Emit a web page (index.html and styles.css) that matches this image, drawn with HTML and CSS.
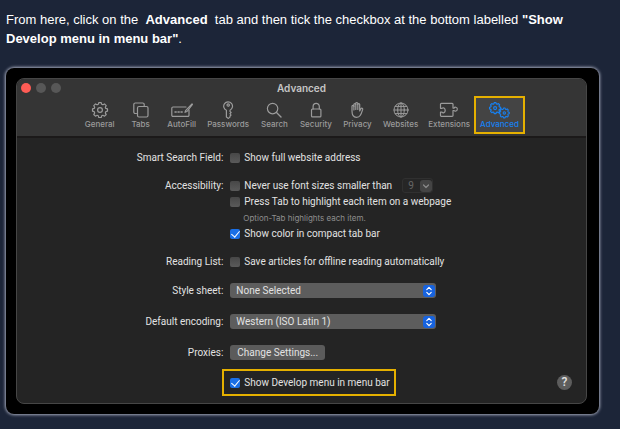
FILE: index.html
```html
<!DOCTYPE html>
<html lang="en">
<head>
<meta charset="utf-8">
<meta name="viewport" content="width=device-width, initial-scale=1">
<title>Enable the Develop menu</title>
<link rel="stylesheet" href="styles.css">
</head>
<body>
<main class="article">
  <p class="intro">From here, click on the&nbsp; <strong>Advanced</strong>&nbsp; tab and then tick the checkbox at the bottom labelled <strong>"Show Develop menu in menu bar"</strong>.</p>

  <div class="frame">
    <section class="window" aria-label="Advanced">
      <header class="chrome">
        <div class="titlebar">
          <div class="lights"><span class="light light-close"></span><span class="light"></span><span class="light"></span></div>
          <h1 class="title">Advanced</h1>
        </div>
        <nav class="toolbar">
          <button class="tab" type="button">
            <svg class="icon" width="20" height="18" viewBox="0 0 20 18"><path id="gear" d="M8.8 1.6h2.4l.5 1.7 1.2.5 1.6-.9 1.7 1.7-.9 1.6.5 1.2 1.7.5v2.3l-1.7.5-.5 1.2.9 1.6-1.7 1.7-1.6-.9-1.2.5-.5 1.7H8.8l-.5-1.7-1.2-.5-1.6.9-1.7-1.7.9-1.6-.5-1.2-1.7-.5V7.9l1.7-.5.5-1.2-.9-1.6 1.7-1.7 1.6.9 1.2-.5z"/><circle cx="10" cy="9" r="2.4"/></svg>
            <span>General</span>
          </button>
          <button class="tab" type="button">
            <svg class="icon" width="20" height="18" viewBox="0 0 20 18"><path d="M5.500 12.500H4.300a1.500 1.500 0 0 1-1.500-1.500V3.500A1.500 1.500 0 0 1 4.300 2h7.400a1.500 1.500 0 0 1 1.500 1.500v1.200"/><rect x="6.500" y="5.500" width="10.500" height="10.500" rx="1.500"/></svg>
            <span>Tabs</span>
          </button>
          <button class="tab" type="button">
            <svg class="icon" width="24" height="18" viewBox="0 0 24 18"><path d="M16 6H3a1.200 1.200 0 0 0-1.200 1.200v7A1.200 1.200 0 0 0 3 15.400h14.800a1.200 1.200 0 0 0 1.200-1.200V9"/><path d="M15 11.300l.8-2L22 2.800M15 11.300l2-.8L22.500 3.500"/><path class="dots" d="M5 10.900h1.200M8 10.900h1.200M11 10.900h1.200"/></svg>
            <span>AutoFill</span>
          </button>
          <button class="tab" type="button">
            <svg class="icon" width="20" height="18" viewBox="0 0 20 18"><path d="M8.400 9.300a4.400 4.400 0 1 1 3.600-.1v1.200l1.100 1.100-1.100 1.200 1 1.300-1 1.200v.9L10.400 17.400 8.400 16z"/><circle cx="10.200" cy="4" r="1.200"/></svg>
            <span>Passwords</span>
          </button>
          <button class="tab" type="button">
            <svg class="icon" width="20" height="18" viewBox="0 0 20 18"><circle cx="8.600" cy="7.600" r="5.200"/><path d="M12.500 11.500l4.500 4.400" stroke-width="1.400"/></svg>
            <span>Search</span>
          </button>
          <button class="tab" type="button">
            <svg class="icon" width="20" height="18" viewBox="0 0 20 18"><rect x="5.500" y="8" width="9.400" height="7.900" rx="1"/><path d="M7.100 8V5.400a3.100 3.100 0 0 1 6.200 0V8"/></svg>
            <span>Security</span>
          </button>
          <button class="tab" type="button">
            <svg class="icon" width="20" height="18" viewBox="0 0 20 18"><path d="M5 10V5.300a.9.900 0 0 1 1.900 0V3.500a.95.95 0 0 1 1.900 0V2.500a1 1 0 0 1 2 0v1a.95.95 0 0 1 1.900 0v6.400l1.300-2.300c.6-.9 2-.3 1.700.8-.7 2-1.200 4.200-2.300 5.800-1 1.600-2.400 2.200-4 2.200C6.500 16.400 5 14 5 10z"/><path d="M6.900 5v4M8.800 3.500v5M10.800 3.500v5"/></svg>
            <span>Privacy</span>
          </button>
          <button class="tab" type="button">
            <svg class="icon icon-fine" width="20" height="18" viewBox="0 0 20 18"><circle cx="10" cy="9" r="7"/><ellipse cx="10" cy="9" rx="3.300" ry="7"/><path d="M10 2v14M3 9h14M4.200 5.400h11.600M4.200 12.600h11.600"/></svg>
            <span>Websites</span>
          </button>
          <button class="tab" type="button">
            <svg class="icon" width="22" height="18" viewBox="0 0 22 18"><path d="M2.500 6.500V3.300a.9.900 0 0 1 .9-.9h10.700a.9.900 0 0 1 .9.900v3.800h1.200c.4-1.300 2.900-1.300 3.100.8s-2.400 2.800-3.100 1.600H15v5a.9.900 0 0 1-.9.900H3.400a.9.900 0 0 1-.9-.9v-3.300h1.700c.6 1.200 3 .6 3-1.800s-2.300-3.200-3-2.100H2.500z"/></svg>
            <span>Extensions</span>
          </button>
          <button class="tab tab-active" type="button" aria-current="page">
            <svg class="icon icon-gears" width="22" height="18" viewBox="0 0 22 18">
              <g transform="translate(-.3 .4) scale(.74)"><use href="#gear"/><circle cx="10" cy="9" r="2"/></g>
              <g transform="translate(9.700 6) scale(.66)"><use href="#gear"/><circle cx="10" cy="9" r="1.800"/></g>
            </svg>
            <span>Advanced</span>
          </button>
        </nav>
      </header>

      <form class="panel">
        <div class="group">
          <div class="row">
            <span class="label">Smart Search Field:</span>
            <div class="field"><label class="check"><input type="checkbox">Show full website address</label></div>
          </div>
          <div class="row">
            <span class="label">Accessibility:</span>
            <div class="field">
              <div class="inline">
                <label class="check"><input type="checkbox">Never use font sizes smaller than</label>
                <span class="select select-size">
                  <select aria-label="Minimum font size" disabled><option>9</option></select>
                  <svg class="arrow" width="12" height="12" viewBox="0 0 12 12"><path d="M3.500 5l2.500 2.500L8.500 5"/></svg>
                </span>
              </div>
              <label class="check"><input type="checkbox">Press Tab to highlight each item on a webpage</label>
              <small class="hint">Option-Tab highlights each item.</small>
              <label class="check"><input type="checkbox" checked>Show color in compact tab bar</label>
            </div>
          </div>
          <div class="row">
            <span class="label">Reading List:</span>
            <div class="field"><label class="check"><input type="checkbox">Save articles for offline reading automatically</label></div>
          </div>
        </div>

        <div class="group group-loose">
          <div class="row">
            <label class="label" for="sheet">Style sheet:</label>
            <div class="field">
              <span class="select">
                <select id="sheet"><option>None Selected</option></select>
                <svg class="arrow" width="12" height="12" viewBox="0 0 12 12"><path d="M3.800 4.600L6 2.400l2.200 2.200M3.800 7.400L6 9.600l2.200-2.200"/></svg>
              </span>
            </div>
          </div>
          <div class="row">
            <label class="label" for="encoding">Default encoding:</label>
            <div class="field">
              <span class="select">
                <select id="encoding"><option>Western (ISO Latin 1)</option></select>
                <svg class="arrow" width="12" height="12" viewBox="0 0 12 12"><path d="M3.800 4.600L6 2.400l2.200 2.200M3.800 7.400L6 9.600l2.200-2.200"/></svg>
              </span>
            </div>
          </div>
          <div class="row">
            <span class="label">Proxies:</span>
            <div class="field"><button class="push" type="button">Change Settings...</button></div>
          </div>
        </div>

        <div class="row row-last">
          <div class="field">
            <label class="check check-marked"><input type="checkbox" checked>Show Develop menu in menu bar</label>
            <button class="help" type="button" aria-label="Help">?</button>
          </div>
        </div>
      </form>
    </section>
  </div>
</main>
</body>
</html>
```
FILE: styles.css
```css
* {
  box-sizing: border-box;
}

body {
  margin: 0;
  background: #1c2538;
  color: #fff;
  font-family: "Liberation Sans", Arial, sans-serif;
}

.article {
  padding: 10px 21px 14px 6px;
}

.intro {
  margin: 0 0 20px;
  font-size: 13px;
  line-height: 19px;
}

.frame {
  padding: 10px 12px 10px 10px;
  border-radius: 8px;
  background: #000;
  box-shadow: 0 0 3px 1px #a4a9bb;
}

.window {
  overflow: hidden;
  border: 1px solid #464646;
  border-radius: 8px;
  background: #242424;
  color: #e2e2e2;
  font-family: Inter, sans-serif;
  font-size: 10px;
  line-height: 16px;
}

button,
select {
  margin: 0;
  border: 0;
  color: inherit;
  font: inherit;
}

.chrome {
  border-bottom: 2px solid #1b1919;
  background: #353535;
}

.titlebar {
  display: grid;
  grid-template-columns: 1fr auto 1fr;
  align-items: center;
  padding: 1px 4px 0;
}

.lights {
  display: flex;
  gap: 5px;
}

.light {
  width: 10px;
  height: 10px;
  border-radius: 50%;
  background: #575757;
}

.light-close {
  background: #ff5c55;
}

.title {
  margin: 0;
  color: #c6c6c6;
  font-size: 10px;
  font-weight: 600;
}

.toolbar {
  display: flex;
  justify-content: center;
  gap: 10px;
}

.tab {
  display: flex;
  flex-direction: column;
  align-items: center;
  min-width: 31px;
  padding: 5px 0 7px;
  background: none;
  color: #9b9b9b;
  font-size: 8px;
  font-weight: 500;
  line-height: 10px;
}

.icon {
  fill: none;
  stroke: currentColor;
  stroke-width: 1.2;
  stroke-linejoin: round;
  stroke-linecap: round;
}

.icon-fine {
  stroke-width: 1;
}

.icon-gears {
  stroke-width: 1.6;
}

.dots {
  stroke-width: 1.5;
}

.tab-active {
  margin: 0 -6px 2px;
  padding: 3px 4px;
  border: 2px solid #e5b000;
  background: #444;
  color: #1781f2;
}

.panel {
  padding: 12px 2px 7px 0;
  font-family: Roboto, sans-serif;
}

.group {
  display: grid;
  gap: 12px;
  margin-bottom: 13px;
}

.group-loose {
  gap: 15px;
  margin-bottom: 8px;
}

.row {
  display: grid;
  grid-template-columns: 7fr 12fr;
  column-gap: 7px;
}

.label {
  text-align: right;
}

.field {
  display: grid;
  justify-items: start;
}

.inline {
  display: flex;
  gap: 10px;
}

.check {
  display: flex;
  align-items: center;
  gap: 4px;
}

.check input {
  appearance: none;
  display: grid;
  place-items: center;
  width: 10px;
  height: 10px;
  margin: 0;
  border-radius: 2px;
  background: linear-gradient(#474747, #5a5a5a);
}

.check input:checked {
  background: #1a6fe6;
}

.check input:checked::after {
  content: "";
  width: 4px;
  height: 7px;
  margin-bottom: 2px;
  border: solid #fff;
  border-width: 0 1px 1px 0;
  transform: rotate(40deg);
}

.hint {
  padding-left: 13px;
  color: #8e8e8e;
  font-family: Inter, sans-serif;
  font-size: 8px;
}

.select {
  position: relative;
  display: flex;
  width: 206px;
}

.select select {
  appearance: none;
  width: 100%;
  height: 15px;
  padding: 0 18px 0 6px;
  border-radius: 3px;
  background: #5d5d5d;
  line-height: 15px;
}

.arrow {
  position: absolute;
  top: 2px;
  right: 1px;
  border-radius: 3px;
  background: #1763df;
  fill: none;
  stroke: #fff;
  stroke-width: 1.2;
  stroke-linecap: round;
  stroke-linejoin: round;
}

.select-size {
  width: 31px;
}

.select-size select {
  padding: 0 14px 0 5px;
  border: 1px solid #303030;
  background: #262626;
  color: #666;
  line-height: 13px;
  opacity: 1;
}

.select-size .arrow {
  background: #444;
  stroke: #8a8a8a;
}

.push {
  height: 15px;
  padding: 0 7px;
  border-radius: 3px;
  background: #5b5b5b;
  line-height: 15px;
}

.row-last .field {
  grid-column: 2;
  grid-template-columns: 1fr auto;
  align-items: center;
  padding-right: 12px;
}

.check-marked {
  height: 27px;
  margin-left: -8px;
  padding: 0 4px 0 6px;
  border: 2px solid #e5b000;
}

.help {
  width: 15px;
  height: 15px;
  padding: 0;
  border-radius: 50%;
  background: #5d5d5d;
  font-size: 12px;
  font-weight: 500;
  line-height: 15px;
}
```
